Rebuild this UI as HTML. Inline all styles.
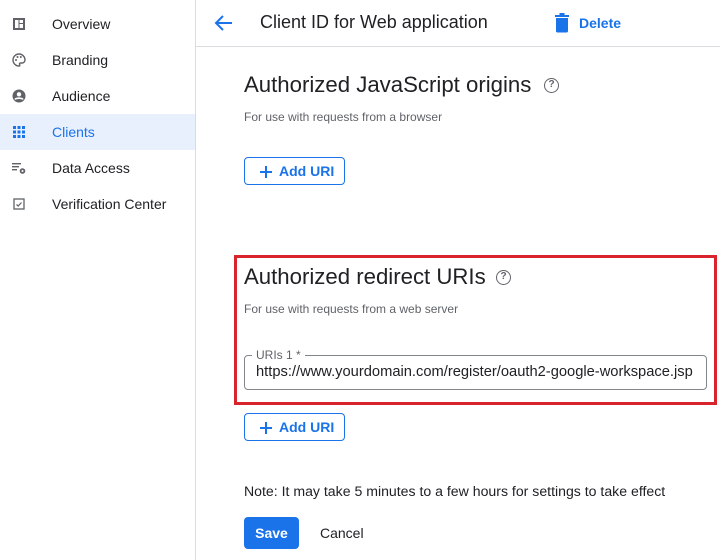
<!DOCTYPE html>
<html><head><style>
*{margin:0;padding:0;box-sizing:border-box}
body{width:720px;height:560px;overflow:hidden;background:#fff;font-family:"Liberation Sans",Arial,sans-serif;color:#202124;position:relative}
.side{position:absolute;left:0;top:0;width:196px;height:560px;border-right:1px solid #dadce0}
.it{position:absolute;left:0;width:195px;height:36px;font-size:14px;line-height:36px;padding-left:52px;color:#202124}
.it.sel{background:#e8f0fe;color:#1a73e8}
.ic{position:absolute;left:12px;top:11px;width:14px;height:14px}
.hdr{position:absolute;left:196px;top:0;right:0;height:47px;border-bottom:1px solid #dadce0}
.abs{position:absolute}
h2{position:absolute;font-size:22.2px;font-weight:400;color:#202124;white-space:nowrap}
.sub{position:absolute;font-size:12px;color:#5f6368}
.btn{position:absolute;left:244px;width:101px;height:28px;border:1px solid #1a73e8;border-radius:4px;color:#1a73e8;font-size:14px;font-weight:bold;line-height:26px;padding-left:34px}
.btn:before{content:"";position:absolute;left:15px;top:13px;width:12px;height:2px;background:#1a73e8}
.btn:after{content:"";position:absolute;left:20px;top:8px;width:2px;height:12px;background:#1a73e8}
.q{position:absolute;width:15px;height:15px;border:1.5px solid #5f6368;border-radius:50%;font-size:10px;font-weight:bold;color:#5f6368;text-align:center;line-height:12px}
</style></head><body>
<div class="side">
<div class="it" style="top:6px"><svg class="ic" viewBox="0 0 14 14"><rect x="1" y="1" width="12" height="12" fill="#5f6368"/><rect x="3" y="3" width="3.5" height="8" fill="#fff"/><rect x="7.5" y="3" width="3.5" height="3" fill="#fff"/><rect x="7.5" y="7" width="3.5" height="4" fill="#fff"/></svg>Overview</div>
<div class="it" style="top:42px"><svg class="ic" viewBox="0 0 14 14"><path d="M7 1a6 6 0 0 0 0 12c1 0 1-1 .6-1.6-.4-.6 0-1.4.8-1.4H10a3 3 0 0 0 3-3C13 3.7 10.3 1 7 1z" fill="none" stroke="#5f6368" stroke-width="1.4"/><circle cx="4" cy="7" r="1" fill="#5f6368"/><circle cx="5.5" cy="4" r="1" fill="#5f6368"/><circle cx="8.8" cy="4" r="1" fill="#5f6368"/></svg>Branding</div>
<div class="it" style="top:78px"><svg class="ic" viewBox="0 0 14 14"><circle cx="7" cy="7" r="6.5" fill="#5f6368"/><circle cx="7" cy="5.3" r="2.2" fill="#fff"/><path d="M3 10.5c1-1.7 7-1.7 8 0" stroke="#fff" stroke-width="1.6" fill="none"/></svg>Audience</div>
<div class="it sel" style="top:114px"><svg class="ic" viewBox="0 0 14 14" fill="#1a73e8"><rect x="1" y="1" width="3" height="3"/><rect x="5.5" y="1" width="3" height="3"/><rect x="10" y="1" width="3" height="3"/><rect x="1" y="5.5" width="3" height="3"/><rect x="5.5" y="5.5" width="3" height="3"/><rect x="10" y="5.5" width="3" height="3"/><rect x="1" y="10" width="3" height="3"/><rect x="5.5" y="10" width="3" height="3"/><rect x="10" y="10" width="3" height="3"/></svg>Clients</div>
<div class="it" style="top:150px"><svg class="ic" viewBox="0 0 14 14"><rect x="0" y="2" width="9" height="1.4" fill="#5f6368"/><rect x="0" y="5" width="7" height="1.4" fill="#5f6368"/><rect x="0" y="8" width="5" height="1.4" fill="#5f6368"/><circle cx="10.5" cy="10" r="2.8" fill="#5f6368"/><circle cx="10.5" cy="10" r="1" fill="#fff"/></svg>Data Access</div>
<div class="it" style="top:186px"><svg class="ic" viewBox="0 0 14 14"><rect x="2" y="2" width="10" height="10" fill="none" stroke="#5f6368" stroke-width="1.3"/><path d="M4.5 7.5l1.7 1.5 3.3-3.5" fill="none" stroke="#5f6368" stroke-width="1.2"/></svg>Verification Center</div>
</div>
<div class="hdr"></div>
<svg class="abs" style="left:214px;top:14px" width="20" height="18" viewBox="0 0 20 18"><path d="M18 9H3M9 2L2 9l7 7" stroke="#1a73e8" stroke-width="2" fill="none"/></svg>
<div class="abs" style="left:260px;top:12px;font-size:18px;color:#202124">Client ID for Web application</div>
<svg class="abs" style="left:554px;top:13px" width="16" height="20" viewBox="0 0 16 20"><rect x="1" y="2" width="14" height="2" fill="#1a73e8"/><rect x="5.5" y="0" width="5" height="2" fill="#1a73e8"/><path d="M2 5h12v13a1.5 1.5 0 0 1-1.5 1.5h-9A1.5 1.5 0 0 1 2 18z" fill="#1a73e8"/></svg>
<div class="abs" style="left:579px;top:15px;font-size:14px;font-weight:bold;color:#1a73e8">Delete</div>

<h2 style="left:244px;top:72px">Authorized JavaScript origins</h2>
<div class="q" style="left:544px;top:78px">?</div>
<div class="sub" style="left:244px;top:110px">For use with requests from a browser</div>
<div class="btn" style="top:157px">Add URI</div>

<div class="abs" style="left:234px;top:255px;width:483px;height:150px;border:3px solid #d9232d"></div>
<h2 style="left:244px;top:264px">Authorized redirect URIs</h2>
<div class="q" style="left:496px;top:270px">?</div>
<div class="sub" style="left:244px;top:302px">For use with requests from a web server</div>
<div class="abs" style="left:244px;top:355px;width:463px;height:35px;border:1px solid #80868b;border-radius:4px"></div>
<div class="abs" style="left:252px;top:348px;background:#fff;padding:0 4px;font-size:12px;color:#5f6368">URIs 1 *</div>
<div class="abs" style="left:256px;top:364px;font-size:14.7px;color:#202124;white-space:nowrap">https://www.yourdomain.com/register/oauth2-google-workspace.jsp</div>
<div class="btn" style="top:413px">Add URI</div>

<div class="abs" style="left:244px;top:483px;font-size:14.1px;color:#202124;white-space:nowrap">Note: It may take 5 minutes to a few hours for settings to take effect</div>
<div class="abs" style="left:244px;top:517px;width:55px;height:32px;background:#1a73e8;border-radius:4px;color:#fff;font-size:14px;font-weight:bold;text-align:center;line-height:32px">Save</div>
<div class="abs" style="left:320px;top:525px;font-size:14px;color:#202124">Cancel</div>
</body></html>
